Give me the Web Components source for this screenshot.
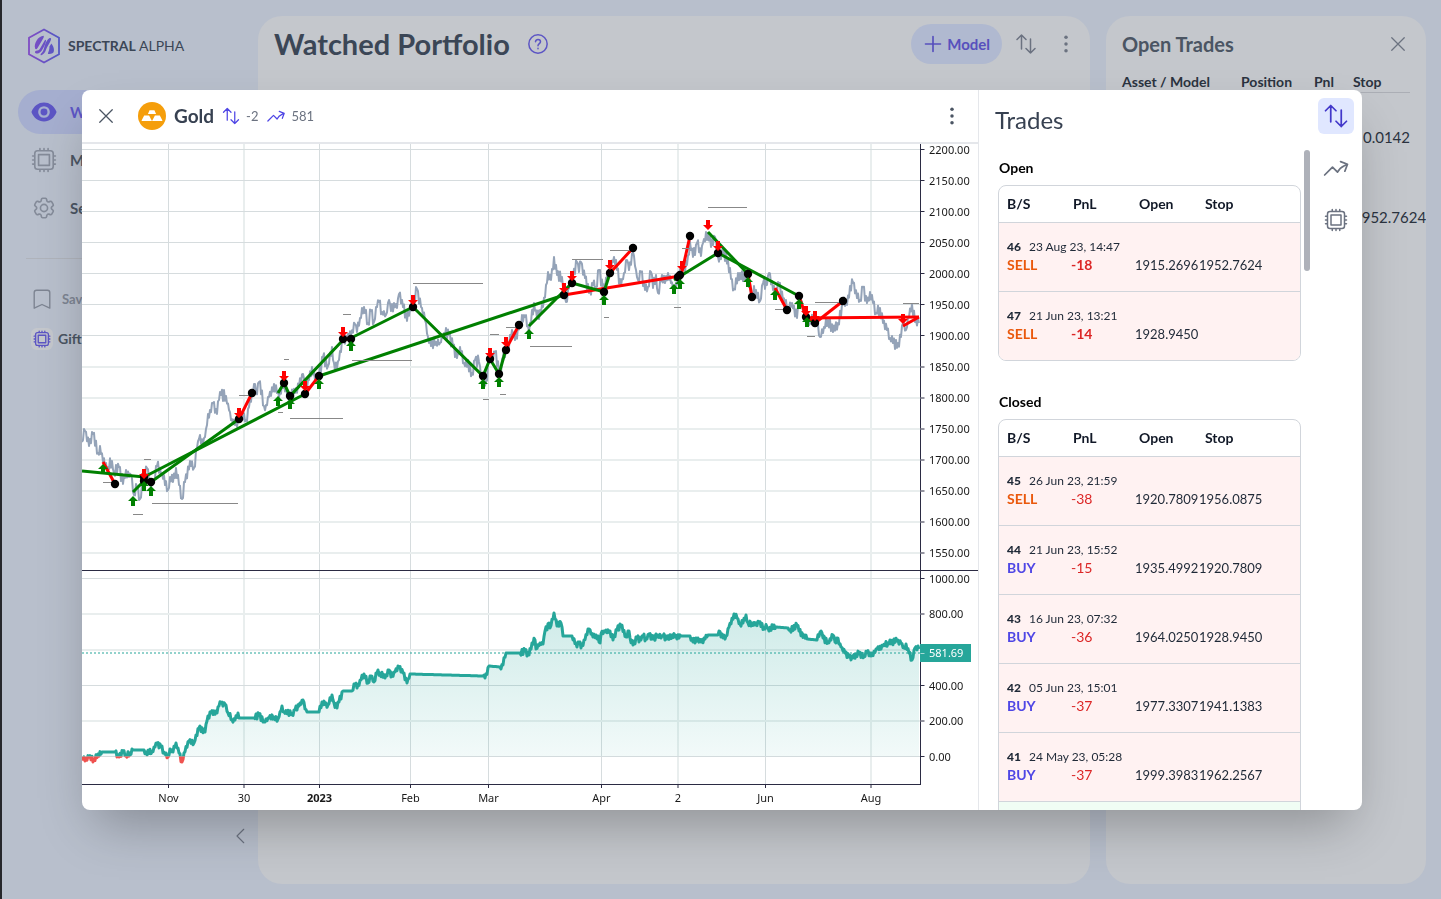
<!DOCTYPE html>
<html lang="en">
<head>
<meta charset="utf-8">
<title>Spectral Alpha – Watched Portfolio</title>
<style>
  html, body { margin: 0; height: 100%; }
  body { font-family: Lato, "Open Sans", sans-serif; font-size: 14px; line-height: 20px; color: #1f2937; overflow: hidden; }
</style>
</head>
<body>
<sa-app></sa-app>

<script>
const define = (name, html, setup) => {
  const tpl = document.createElement('template');
  tpl.innerHTML = html;
  customElements.define(name, class extends HTMLElement {
    constructor() {
      super();
      this.attachShadow({ mode: 'open' }).append(tpl.content.cloneNode(true));
    }
    connectedCallback() { if (setup) setup(this, this.shadowRoot); }
  });
};

/* ---------- icons ---------- */
const ICONS = {
  close: '<path d="M4.500 4.500l15 15M19.500 4.500l-15 15"/>',
  plus: '<path d="M12 3v18M3 12h18"/>',
  swap: '<path d="M7.500 17V3M3 7.500L7.500 3 12 7.500M16.500 7v14M12 16.500l4.500 4.500 4.500-4.500"/>',
  trend: '<path d="M2.250 18L9 11.250l4.306 4.307a11.950 11.950 0 015.814-5.519l2.740-1.220m0 0l-5.940-2.280m5.940 2.280l-2.280 5.941"/>',
  kebab: '<g fill="currentColor" stroke="none"><circle cx="12" cy="4" r="2.100"/><circle cx="12" cy="12" r="2.100"/><circle cx="12" cy="20" r="2.100"/></g>',
  chip: '<path d="M8.250 3v-1.500M12 3v-1.500M15.750 3v-1.500M8.250 22.500V21M12 22.500V21M15.750 22.500V21M3 8.250H1.500M3 12H1.500M3 15.750H1.500M22.500 8.250H21M22.500 12H21M22.500 15.750H21"/><rect x="3.500" y="3.500" width="17" height="17" rx="2.500"/><rect x="7" y="7" width="10" height="10"/>',
  gear: '<path d="M9.594 3.940c.09-.542.560-.94 1.110-.94h2.593c.55 0 1.020.398 1.110.94l.213 1.281c.063.374.313.686.645.870.074.04.147.083.220.127.324.196.720.257 1.075.124l1.217-.456a1.125 1.125 0 011.370.490l1.296 2.247a1.125 1.125 0 01-.260 1.431l-1.003.827c-.293.240-.438.613-.431.992a6.759 6.759 0 010 .255c-.007.378.138.750.430.990l1.005.828c.424.350.534.954.260 1.430l-1.298 2.247a1.125 1.125 0 01-1.369.491l-1.217-.456c-.355-.133-.750-.072-1.076.124a6.570 6.570 0 01-.220.128c-.331.183-.581.495-.644.869l-.213 1.280c-.09.543-.560.941-1.110.941h-2.594c-.550 0-1.020-.398-1.110-.940l-.213-1.281c-.062-.374-.312-.686-.644-.870a6.520 6.520 0 01-.220-.127c-.325-.196-.720-.257-1.076-.124l-1.217.456a1.125 1.125 0 01-1.369-.490l-1.297-2.247a1.125 1.125 0 01.260-1.431l1.004-.827c.292-.240.437-.613.430-.992a6.932 6.932 0 010-.255c.007-.378-.138-.750-.430-.990l-1.004-.828a1.125 1.125 0 01-.260-1.430l1.297-2.247a1.125 1.125 0 011.370-.491l1.216.456c.356.133.751.072 1.076-.124.072-.044.146-.087.220-.128.332-.183.582-.495.644-.869l.214-1.281z"/><circle cx="12" cy="12" r="3.300"/>',
  bookmark: '<path d="M3.500 22V5A2.500 2.500 0 016 2.500h12A2.500 2.500 0 0120.500 5v17L12 18z"/>',
  eye: '<path fill="currentColor" stroke="none" fill-rule="evenodd" d="M12 3.300C6.800 3.300 2.600 6.400.4 12c2.200 5.600 6.400 8.700 11.600 8.700S21.400 17.600 23.600 12C21.400 6.400 17.200 3.300 12 3.300zM12 6.600a5.400 5.400 0 100 10.800 5.400 5.400 0 000-10.800zM12 8.800a3.200 3.200 0 100 6.400 3.200 3.200 0 000-6.400z"/>',
  help: '<circle cx="12" cy="12" r="11"/><path d="M9 9.200c.300-1.700 1.500-2.600 3-2.600 1.700 0 3 1.100 3 2.700 0 2.200-3 2.300-3 4.900M12 17.200v.400"/>',
  chevron: '<path d="M17 3L8 12l9 9"/>',
  gold: '<circle cx="12" cy="12" r="12" fill="#f59e0b" stroke="none"/><path fill="#fff" stroke="none" d="M9.900 7h4.200l1.400 3.200h-7zM5.300 11.600h4.200l2 3.800.5.900H3l.4-1.100zM14.500 11.600h4.200l1.900 3.600.4 1.100h-9l.5-.9z"/>'
};
customElements.define('sa-icon', class extends HTMLElement {
  constructor() { super(); this.attachShadow({ mode: 'open' }); }
  connectedCallback() {
    this.shadowRoot.innerHTML = `<style>
      :host { display: inline-block; flex: none; width: 24px; height: 24px; }
      svg { display: block; width: 100%; height: 100%; fill: none; stroke: currentColor;
            stroke-width: var(--stroke, 1.500); stroke-linecap: round; stroke-linejoin: round; overflow: visible; }
    </style><svg viewBox="0 0 24 24" aria-hidden="true">${ICONS[this.getAttribute('name')]}</svg>`;
  }
});

/* ---------- sidebar ---------- */
define('sa-nav-item', `<style>
  :host { display: block; }
  a { display: flex; align-items: center; height: 44px; box-sizing: border-box; padding-left: 13px; gap: 13px;
      border-radius: 22px; color: #4b5563; font-size: 15px; font-weight: 700; text-decoration: none; }
  ::slotted(sa-icon) { width: 26px; height: 26px; color: #848b99; }
  :host([active]) a { background: #a5aecf; color: #5c55c4; }
  :host([active]) ::slotted(sa-icon) { color: #5c55c4; }
</style><a href="#"><slot name="icon"></slot><slot></slot></a>`);

define('sa-sidebar', `<style>
  :host { display: flex; flex-direction: column; box-sizing: border-box; padding: 26px 6px 51px 16px; }
  .brand { display: flex; align-items: center; gap: 8px; height: 40px; padding-left: 10px; font-size: 14px; color: #3b4656; }
  .brand svg { width: 32px; height: 36px; }
  nav { display: grid; gap: 4px; margin: 24px 10px 0 0; }
  hr { margin: 28px 8px 0; border: 0; border-top: 1px solid #afb3bb; width: 208px; }
  .saved { display: grid; gap: 12px; margin: 26px 0 0 13px; }
  .saved a { display: flex; align-items: center; height: 28px; text-decoration: none; color: #7d8492; font-size: 13px; font-weight: 700; gap: 9px; }
  .saved sa-icon[name=bookmark] { width: 22px; height: 22px; }
  .saved a.model { color: #4b5563; font-size: 14px; gap: 5px; }
  .badge { display: grid; place-items: center; width: 22px; height: 22px; border-radius: 6px; background: #c4c7cc; color: #5c55c4; }
  .badge sa-icon { width: 18px; height: 18px; --stroke: 1.800; }
  button { display: grid; place-items: center; align-self: flex-end; margin-top: auto; width: 24px; height: 24px; padding: 0; border: 0; background: none; color: #6b7280; }
  button sa-icon { width: 18px; height: 18px; }
</style>
<div class="brand">
  <svg viewBox="0 0 32 36" fill="none" aria-hidden="true">
    <defs><linearGradient id="g" gradientUnits="userSpaceOnUse" x1="2" y1="0" x2="30" y2="0"><stop stop-color="#7f4cc4"/><stop offset="1" stop-color="#5558c4"/></linearGradient></defs>
    <path d="M16 1.500L31 9.700V26.300L16 34.500 1 26.300V9.700z" stroke="url(#g)" stroke-width="1.800"/>
    <g fill="url(#g)">
      <path d="M15.600 7.800c.800 1-.4 2.800-1.600 4.800L9.400 20.200c-.8 1.300-1.900 1.200-2.300.2-1.500-4.600 2.900-12.400 8.500-12.600z"/>
      <path d="M7 24.600c-.3-1 .500-1.600 2.200-2 2-.5 2.600-1.600 3.600-3.400l3.600-6.300c.8-1.400 1.600-1.600 1.600-.3 0 2.600-2.800 8.400-5 11-1.800 2.200-5.300 2.700-6 1z"/>
      <path d="M12.600 27c-.4-1 1-1.600 2-3.200 1.300-2 1.600-5 2.600-7.600 1.400-3.800 3.800-6.600 5.300-6.200 1.200.5.4 2.400-.6 4.200l-2.800 5c-.9 1.600-1.200 3.600-2.400 5.400-1.200 1.700-3.500 3.500-4.100 2.400z"/>
      <path d="M21.400 18.600l2-3.200c1.600 2 2.900 4.900 2.500 7.600-.3 2.200-2.200 3-4.700 3-1.500 0-1.500-.6-1-1.600 1.100-2.200 1.300-3.800 1.200-5.800z"/>
    </g>
  </svg>
  <span><b>SPECTRAL</b> ALPHA</span>
</div>
<nav>
  <sa-nav-item active><sa-icon slot="icon" name="eye"></sa-icon>Watched</sa-nav-item>
  <sa-nav-item><sa-icon slot="icon" name="chip"></sa-icon>Models</sa-nav-item>
  <sa-nav-item><sa-icon slot="icon" name="gear"></sa-icon>Settings</sa-nav-item>
</nav>
<hr>
<div class="saved">
  <a href="#"><sa-icon name="bookmark"></sa-icon>Saved</a>
  <a href="#" class="model"><span class="badge"><sa-icon name="chip"></sa-icon></span>Gift</a>
</div>
<button aria-label="Collapse sidebar"><sa-icon name="chevron"></sa-icon></button>`);

/* ---------- background cards ---------- */
define('sa-portfolio', `<style>
  :host { display: block; border-radius: 24px; background: #c4c7cc; }
  header { display: flex; align-items: center; height: 56px; padding: 0 12px 0 16px; }
  h1 { margin: 0 18px 0 0; font-size: 29px; line-height: 36px; font-weight: 700; color: #3b4656; }
  h1 + sa-icon { width: 20px; height: 20px; color: #5c55c4; --stroke: 1.800; }
  .pill { display: flex; align-items: center; gap: 4px; height: 40px; margin: 0 12px 0 auto; padding: 0 12px; border: 0;
    border-radius: 20px; background: #b0b9d0; color: #5750bd; font: 700 15px/20px Lato, sans-serif; }
  .pill sa-icon { width: 20px; height: 20px; --stroke: 2; }
  .tool { display: grid; place-items: center; width: 24px; height: 24px; padding: 0; border: 0; background: none; color: #6b7280; }
  .tool + .tool { margin-left: 16px; }
  .tool [name=kebab] { width: 20px; height: 20px; }
</style>
<header>
  <h1>Watched Portfolio</h1><sa-icon name="help"></sa-icon>
  <button class="pill"><sa-icon name="plus"></sa-icon>Model</button>
  <button class="tool" aria-label="Sort"><sa-icon name="swap"></sa-icon></button>
  <button class="tool" aria-label="More"><sa-icon name="kebab"></sa-icon></button>
</header>`);

define('sa-open-trades', `<style>
  :host { display: block; border-radius: 24px; background: #c4c7cc; overflow: hidden; }
  header { display: flex; align-items: center; justify-content: space-between; height: 56px; padding: 0 18px 0 16px; }
  h2 { margin: 0; font-size: 20px; line-height: 28px; font-weight: 700; color: #4b5563; }
  button { padding: 0; border: 0; background: none; color: #6b7280; height: 20px; }
  button sa-icon { width: 20px; height: 20px; }
  table { width: 288px; margin-left: 16px; border-collapse: collapse; table-layout: fixed; }
  th { height: 20px; padding: 0; border-bottom: 1px solid #abaeb5; font-size: 14px; font-weight: 700; text-align: left; color: #2b333f; }
  td { box-sizing: border-box; height: 80px; padding: 0; font-size: 15px; white-space: nowrap; color: #2b333f; }
  tr.first td { height: 84px; padding-top: 5px; }
</style>
<header><h2>Open Trades</h2><button aria-label="Close"><sa-icon name="close"></sa-icon></button></header>
<table>
  <colgroup><col style="width:119px"><col style="width:73px"><col style="width:39px"><col></colgroup>
  <thead><tr><th>Asset / Model</th><th>Position</th><th>Pnl</th><th>Stop</th></tr></thead>
  <tbody>
    <tr class="first"><td></td><td></td><td></td><td align="right">0.0142</td></tr>
    <tr><td></td><td></td><td></td><td>1952.7624</td></tr>
  </tbody>
</table>`);

/* ---------- chart ---------- */
const PRICE = [0,298,3,287,7,302,11,290,16,309,18,302,21,318,26,323,30,317,32,329,37,323,41,340,44,326,47,333,49,331,52,351,55,343,58,355,61,334,65,324,68,339,72,336,75,322,80,329,86,346,88,333,91,338,94,324,97,341,100,355,103,338,108,317,112,324,115,304,117,295,121,300,123,293,125,281,128,266,131,259,135,270,137,256,139,251,144,252,147,266,149,276,153,281,156,276,160,268,164,276,167,263,171,249,173,240,174,248,177,238,182,262,184,261,187,253,192,240,195,249,197,253,202,239,205,250,208,253,213,249,217,243,221,230,223,246,227,236,230,223,233,236,237,231,241,213,246,222,250,203,252,219,255,224,257,216,261,195,265,196,269,191,273,180,275,188,278,174,282,163,286,179,289,167,292,178,295,163,297,158,300,168,304,171,307,156,309,167,312,159,315,164,317,150,321,163,325,177,328,164,331,161,335,145,339,163,343,176,346,193,349,202,354,198,358,199,362,189,367,191,371,203,375,214,378,203,382,219,384,216,390,229,393,216,397,218,399,233,404,238,407,218,413,208,418,231,421,213,426,203,430,186,433,196,438,179,443,173,447,188,452,159,455,174,461,163,464,141,466,128,469,136,472,113,475,131,480,133,484,158,487,144,491,133,495,118,497,128,499,118,503,134,507,149,511,141,514,143,517,126,521,146,525,133,528,124,532,113,535,126,539,142,542,129,545,116,547,126,551,108,554,126,556,136,559,128,563,146,566,143,569,128,571,144,574,131,576,149,580,131,583,139,586,129,589,139,593,146,596,133,601,126,605,121,608,98,611,113,615,99,619,112,621,99,626,89,629,103,633,93,636,113,641,109,646,116,649,135,652,145,658,129,665,136,670,149,674,146,678,157,681,139,685,141,687,129,691,146,694,149,697,139,701,156,706,163,710,159,715,174,718,153,722,169,726,179,731,173,735,179,738,193,742,183,746,176,751,188,756,179,761,159,765,161,768,142,771,139,775,154,778,156,781,143,785,159,788,148,791,159,794,169,798,164,801,179,805,186,808,194,811,199,816,199,819,193,821,179,824,186,826,173,830,160,833,178,837,179];
const EQUITY = [0,613,3,617,7,613,12,616,16,610,20,608,33,608,37,613,41,608,44,612,48,609,51,606,62,606,64,608,70,608,73,603,75,599,79,603,82,608,86,613,88,605,91,608,94,599,97,609,100,618,102,609,107,597,112,599,114,591,117,584,123,588,125,577,129,568,135,569,137,562,139,559,143,560,146,569,150,576,153,576,156,569,157,574,172,574,177,571,182,578,187,574,192,573,196,575,198,568,200,562,202,568,210,570,213,566,217,562,221,556,223,565,225,568,237,568,240,558,246,561,250,551,252,559,255,564,257,558,261,547,270,547,273,540,275,544,279,536,282,530,286,539,289,532,292,538,295,529,298,529,303,534,307,526,309,533,313,528,317,523,321,529,325,539,328,530,401,532,403,534,407,522,418,523,419,525,424,509,438,509,443,507,447,511,450,499,453,496,454,505,458,499,461,500,463,487,467,479,468,484,472,469,475,482,479,479,481,492,490,492,495,503,497,498,499,504,502,496,507,485,511,493,514,491,518,499,519,490,522,487,528,487,531,496,535,486,539,481,544,493,547,487,548,494,551,501,555,494,559,496,561,492,564,495,567,490,571,495,576,491,579,494,581,492,585,495,590,491,593,493,599,492,608,492,611,498,616,494,619,498,626,491,636,491,637,487,639,493,644,492,647,483,652,470,655,474,658,480,661,479,664,471,666,479,673,481,677,478,682,484,685,483,687,487,692,481,694,483,706,484,708,486,715,481,717,487,725,495,735,496,739,487,741,494,746,499,751,491,754,499,755,494,759,503,763,509,767,513,771,514,774,510,777,510,782,513,785,508,789,512,795,505,801,502,806,499,815,497,819,499,822,504,824,500,827,509,830,516,833,504,837,505];
const WINS = ['0,327 62,333 223,250','51,348 62,337','69,338 157,275','196,249 202,239 208,252 261,196','269,194 331,163 401,232 408,215 417,230 424,205','237,232 482,151','447,182 490,139 522,148 528,129','592,136 636,109 717,152','626,88 666,130'];
const LOSSES = ['21,318 33,340','157,275 170,249','223,250 237,232','261,196 269,194','424,205 437,181','528,129 551,104','482,151 598,132','599,132 608,92','666,130 670,153','693,144 705,166','717,152 724,173 733,178','724,174 837,173','733,179 761,157','821,182 837,173'];
const EXITS = [33,340,62,333,62,337,69,338,157,275,170,249,202,239,208,252,223,250,237,232,261,195,269,195,331,163,401,232,408,215,417,230,424,206,437,181,482,151,490,139,522,148,528,129,551,104,596,133,598,131,608,92,636,109,666,130,670,153,705,166,717,152,724,173,733,179,761,157];
const BUYS = [21,325,51,357,62,342,69,347,196,257,208,260,237,240,269,202,401,240,417,238,447,190,522,156,592,145,598,140,666,138,693,151,717,160,725,178];
const SELLS = [62,329,157,268,202,231,223,241,261,187,331,155,408,208,424,197,482,143,490,131,528,120,600,121,626,80,636,101,724,166,733,171,821,174];
const STOPS = [[21,33,338],[51,61,370],[62,69,315],[70,156,359],[157,170,251],[196,201,268],[202,207,215],[208,261,274],[261,269,170],[270,330,216],[331,401,139],[401,407,255],[408,417,190],[418,424,250],[424,437,183],[448,490,202],[490,521,115],[522,527,173],[528,551,106],[592,599,163],[600,608,104],[626,665,63],[693,705,165],[725,733,192],[733,761,158],[821,837,159]];
const MONTHS = [[86.5,'Nov',1],[162,'30',2],[237.5,'2023',1],[328.5,'Feb',1],[406.5,'Mar',1],[519.5,'Apr',1],[596,'2',2],[683.5,'Jun',1],[789,'Aug',2]];
const LEVELS = [[5.5,'2200.00',1],[36.5,'2150.00',1],[67.5,'2100.00',1],[98.5,'2050.00',1],[129.5,'2000.00',1],[160.5,'1950.00',1],[191.5,'1900.00',1],[223,'1850.00',2],[254,'1800.00',2],[285,'1750.00',2],[316,'1700.00',2],[347,'1650.00',2],[378,'1600.00',2],[409,'1550.00',2],
  [434.5,'1000.00',1],[470,'800.00',2],[506,'',2],[541.5,'400.00',1],[577,'200.00',2],[612.5,'0.00',1]];

/* Fills the gaps between swing points with a repeatable intraday wiggle. */
function wiggle(points, step, amp) {
  let seed = 7, sign = 1;
  const rnd = () => (seed = (seed * 16807) % 2147483647) / 2147483647;
  const out = [];
  for (let i = 0; i < points.length - 2; i += 2) {
    const [x0, y0, x1, y1] = points.slice(i, i + 4);
    const n = Math.max(1, Math.round((x1 - x0) / step));
    const flat = Math.abs(y1 - y0) <= 1 && x1 - x0 > 6 || x1 - x0 > 20;
    for (let k = 0; k < n; k++) {
      const t = k / n;
      sign = -sign;
      out.push([x0 + (x1 - x0) * t, y0 + (y1 - y0) * t + (k && !flat ? sign * (0.3 + rnd() * 0.7) * amp : 0)]);
    }
  }
  out.push(points.slice(-2));
  return out;
}
const PLOT_W = 838, AXIS_W = 58;

customElements.define('sa-chart', class extends HTMLElement {
  constructor() {
    super();
    this.attachShadow({ mode: 'open' }).innerHTML = `<style>
      :host { display: block; min-width: 0; min-height: 0; }
      svg { display: block; width: 100%; height: 666px; overflow: visible; }
      text { font: 11px "Noto Sans", "Open Sans", sans-serif; fill: #191919; }
      .grid1 { stroke: #d6dcde; } .grid2 { stroke: #e9eeee; stroke-width: 2; }
      .axis { stroke: #2b2b43; } .tick2 { stroke: #9595a1; stroke-width: 2; }
      .win, .loss { fill: none; stroke: #008000; stroke-width: 3; } .loss { stroke: #f00; }
      .stop { stroke: #888; }
    </style><svg role="img" aria-label="Gold price and cumulative result"></svg>`;
  }
  connectedCallback() {
    this.draw();
    new ResizeObserver(() => this.draw()).observe(this);
  }
  draw() {
    const width = this.clientWidth - AXIS_W;
    if (width <= 0) return;
    const k = width / PLOT_W;
    const X = v => Math.round(v * k * 100) / 100;
    const line = pts => 'M' + pts.map(([x, y]) => X(x) + ' ' + y.toFixed(1)).join('L');
    const poly = (cls, s) => `<polyline class="${cls}" points="${s.split(' ').map(p => { const [x, y] = p.split(','); return X(+x) + ',' + y; }).join(' ')}"/>`;
    const pairs = (a, f) => { let s = ''; for (let i = 0; i < a.length; i += 2) s += f(X(a[i]), a[i + 1]); return s; };
    const A = width + 0.5;
    let s = `<defs>
      <linearGradient id="fill" gradientUnits="userSpaceOnUse" x1="0" y1="469" x2="0" y2="612"><stop stop-color="#26a69a" stop-opacity=".22"/><stop offset="1" stop-color="#26a69a" stop-opacity=".06"/></linearGradient>
      <clipPath id="plot"><rect width="${width}" height="640"/></clipPath>
      <clipPath id="gain"><rect y="427" width="${width}" height="185.500"/></clipPath>
      <clipPath id="drop"><rect y="612.500" width="${width}" height="28"/></clipPath></defs>`;
    for (const [x, , w] of MONTHS) s += `<path class="grid${w}" d="M${X(x)} 0V640"/>`;
    for (const [y, , w] of LEVELS) s += `<path class="grid${w}" d="M0 ${y}H${width}"/>`;
    s += `<g clip-path="url(#plot)"><path d="${line(wiggle(PRICE, 1, 6))}" fill="none" stroke="#94a3b8" stroke-width="2" stroke-linejoin="round"/>`;
    s += LOSSES.map(p => poly('loss', p)).join('') + WINS.map(p => poly('win', p)).join('');
    s += STOPS.map(([a, b, y]) => `<path class="stop" d="M${X(a)} ${y + .5}H${X(b)}"/>`).join('');
    s += pairs(EXITS, (x, y) => `<circle cx="${x}" cy="${y}" r="4.200"/>`);
    s += pairs(BUYS, (x, y) => `<path fill="green" d="M${x} ${y - 5}l5 5h-3v5h-4v-5h-3z"/>`);
    s += pairs(SELLS, (x, y) => `<path fill="red" d="M${x} ${y + 6}l5-5h-3v-5h-4v5h-3z"/>`) + '</g>';
    const eq = line(wiggle(EQUITY, 1, 3));
    s += `<path clip-path="url(#gain)" fill="url(#fill)" d="${eq}V612.500H0z"/>
      <g fill="none" stroke-width="3" stroke-linejoin="round"><path clip-path="url(#gain)" stroke="#26a69a" d="${eq}"/><path clip-path="url(#drop)" stroke="#ef5350" d="${eq}"/></g>
      <path d="M0 509H${width}" stroke="#26a69a" stroke-width="2" stroke-opacity=".5" stroke-dasharray="2 2"/>
      <path class="axis" d="M${A} 0V641M0 640.500H${A}M0 426.500H${this.clientWidth}"/>`;
    for (const [x, t, w] of MONTHS) s += `<path class="${w > 1 ? 'tick2' : 'axis'}" d="M${X(x)} 641v3"/><text x="${X(x)}" y="658" text-anchor="middle"${t === '2023' ? ' style="font-weight:700"' : ''}>${t}</text>`;
    for (const [y, t, w] of LEVELS) if (t) s += `<path class="${w > 1 ? 'tick2' : 'axis'}" d="M${A} ${y}h4"/><text x="${A + 8.5}" y="${Math.round(y + 4)}">${t}</text>`;
    s += `<rect x="${A - .5}" y="500" width="51" height="18" fill="#26a69a"/><path d="M${A} 509.500h4" stroke="#fff" stroke-opacity=".6"/><text x="${A + 8.5}" y="513" style="fill:#fff">581.69</text>`;
    this.shadowRoot.querySelector('svg').innerHTML = s;
  }
});

/* ---------- trades ---------- */
const TRADES = {
  open: [['46', '23 Aug 23, 14:47', 'SELL', '-18', '1915.2696', '1952.7624'], ['47', '21 Jun 23, 13:21', 'SELL', '-14', '1928.9450', '']],
  closed: [['45', '26 Jun 23, 21:59', 'SELL', '-38', '1920.7809', '1956.0875'], ['44', '21 Jun 23, 15:52', 'BUY', '-15', '1935.4992', '1920.7809'],
    ['43', '16 Jun 23, 07:32', 'BUY', '-36', '1964.0250', '1928.9450'], ['42', '05 Jun 23, 15:01', 'BUY', '-37', '1977.3307', '1941.1383'],
    ['41', '24 May 23, 05:28', 'BUY', '-37', '1999.3983', '1962.2567']]
};

define('sa-trade-table', `<style>
  :host { display: block; }
  h3 { margin: 0; height: 35px; padding-left: 1px; font-size: 14px; line-height: 35px; font-weight: 700; color: #000; }
  .frame { border: 1px solid #d1d5db; border-radius: 8px; overflow: hidden; }
  table { width: 100%; border-collapse: collapse; table-layout: fixed; }
  th, td { padding: 0; text-align: left; white-space: nowrap; }
  th { height: 36px; font-size: 14px; font-weight: 700; color: #111827; }
  th:nth-child(2) { padding-left: 2px; } th:nth-child(3) { padding-left: 4px; } th:nth-child(4) { padding-left: 6px; }
  th:first-child, td:first-child { padding-left: 8px; }
  tbody { border-top: 1px solid #d1d5db; background: #fff2f2; }
  tbody.gain { background: #f0fdf4; }
  .meta td { padding-top: 16px; height: 16px; font-size: 12px; line-height: 16px; }
  .meta b { margin-right: 8px; font-size: 12px; font-weight: 900; }
  .vals td { height: 20px; padding-bottom: 16px; font-size: 13px; line-height: 20px; }
  .vals .side, .vals .pnl { font-size: 14px; }
  .side { font-weight: 700; color: #4f46e5; }
  .side.sell { color: #ea580c; }
  .pnl { color: #dc2626; }
  .open .pnl { font-weight: 700; }
</style>
<h3></h3>
<div class="frame"><table>
  <colgroup><col style="width:72px"><col style="width:64px"><col style="width:64px"><col></colgroup>
  <thead><tr><th>B/S</th><th>PnL</th><th>Open</th><th>Stop</th></tr></thead>
</table></div>`, (host, root) => {
  if (root.querySelector('tbody')) return;
  const kind = host.getAttribute('kind');
  root.querySelector('h3').textContent = kind === 'open' ? 'Open' : 'Closed';
  const table = root.querySelector('table');
  table.classList.add(kind);
  for (const [no, date, side, pnl, open, stop] of TRADES[kind]) {
    table.insertAdjacentHTML('beforeend', `<tbody${pnl[0] === '-' ? '' : ' class="gain"'}>
      <tr class="meta"><td colspan="4"><b>${no}</b>${date}</td></tr>
      <tr class="vals"><td class="side ${side.toLowerCase()}">${side}</td><td class="pnl">${pnl}</td><td>${open}</td><td>${stop}</td></tr></tbody>`);
  }
  if (kind === 'closed') table.insertAdjacentHTML('beforeend', '<tbody class="gain"><tr><td colspan="4" style="height:68px"></td></tr></tbody>');
});

define('sa-trades-panel', `<style>
  :host { display: grid; grid-template-columns: minmax(0, 1fr) 36px; gap: 8px; box-sizing: border-box; min-height: 0;
    padding: 0 8px 0 16px; border-left: 1px solid #e5e7eb; overflow: hidden; }
  .list { display: grid; grid-template-rows: 60px minmax(0, 1fr); min-height: 0; }
  h2 { margin: 0; font-size: 24px; line-height: 60px; font-weight: 400; color: #374151; }
  .scroll { position: relative; overflow: hidden; padding: 0 9px 0 3px; }
  .thumb { position: absolute; top: 0; right: 0; width: 6px; height: 121px; border-radius: 3px; background: #aeb1b9; }
  sa-trade-table + sa-trade-table { margin-top: 23px; }
  .rail { display: flex; flex-direction: column; gap: 16px; padding-top: 8px; }
  button { display: grid; place-items: center; width: 36px; height: 36px; padding: 0; border: 0; border-radius: 6px; background: none; color: #6b7280; }
  button.on { background: #e0e7ff; color: #4338ca; }
  .on sa-icon { width: 28px; height: 28px; }
  .rail sa-icon[name=trend] { width: 28px; height: 28px; }
</style>
<div class="list">
  <h2>Trades</h2>
  <div class="scroll">
    <sa-trade-table kind="open"></sa-trade-table>
    <sa-trade-table kind="closed"></sa-trade-table>
    <div class="thumb"></div>
  </div>
</div>
<div class="rail">
  <button class="on" aria-label="Trades"><sa-icon name="swap"></sa-icon></button>
  <button aria-label="Performance"><sa-icon name="trend"></sa-icon></button>
  <button aria-label="Model"><sa-icon name="chip"></sa-icon></button>
</div>`);

define('sa-asset-dialog', `<style>
  :host { display: grid; grid-template-columns: minmax(0, 1fr) 384px; grid-template-rows: minmax(0, 1fr); overflow: hidden; border-radius: 8px; background: #fff;
    box-shadow: 0 25px 50px -12px rgba(0,0,0,.28); }
  .main { display: grid; grid-template-rows: 54px minmax(0, 1fr); min-width: 0; }
  header { display: flex; align-items: center; box-sizing: border-box; padding: 0 16px 0 14px; border-bottom: 2px solid #e5e7eb; color: #6b7280; font-size: 13px; }
  button { display: grid; padding: 0; border: 0; background: none; color: #4b5563; }
  .close sa-icon, .more sa-icon { width: 20px; height: 20px; }
  .more { margin-left: auto; }
  .gold { width: 28px; height: 28px; margin: 0 8px 0 22px; }
  h2 { margin: 0 7px 0 0; font-size: 19px; line-height: 28px; font-weight: 700; color: #374151; }
  .stat { display: flex; align-items: center; gap: 5px; margin-right: 8px; }
  .stat sa-icon { width: 20px; height: 20px; color: #4f46e5; }
</style>
<div class="main">
  <header>
    <button class="close" aria-label="Close"><sa-icon name="close"></sa-icon></button>
    <sa-icon class="gold" name="gold"></sa-icon>
    <h2>Gold</h2>
    <span class="stat"><sa-icon name="swap"></sa-icon>-2</span>
    <span class="stat"><sa-icon name="trend"></sa-icon>581</span>
    <button class="more" aria-label="More"><sa-icon name="kebab"></sa-icon></button>
  </header>
  <sa-chart></sa-chart>
</div>
<sa-trades-panel></sa-trades-panel>`);

define('sa-app', `<style>
  :host { display: block; height: 100vh; box-sizing: border-box; border-left: 2px solid #26272b; background: #b8bfcc; }
  .page { display: grid; grid-template-columns: 256px minmax(0, 1fr) 320px; height: 100%; padding-right: 15px; }
  sa-portfolio { margin: 16px 16px 15px 0; }
  sa-open-trades { margin: 16px 0 15px; }
  .overlay { position: fixed; inset: 0 0 0 2px; display: grid; padding: 90px 79px 89px 80px; }
</style>
<div class="page">
  <sa-sidebar></sa-sidebar>
  <sa-portfolio></sa-portfolio>
  <sa-open-trades></sa-open-trades>
</div>
<div class="overlay"><sa-asset-dialog role="dialog" aria-label="Gold"></sa-asset-dialog></div>`);
</script>
</body>
</html>
